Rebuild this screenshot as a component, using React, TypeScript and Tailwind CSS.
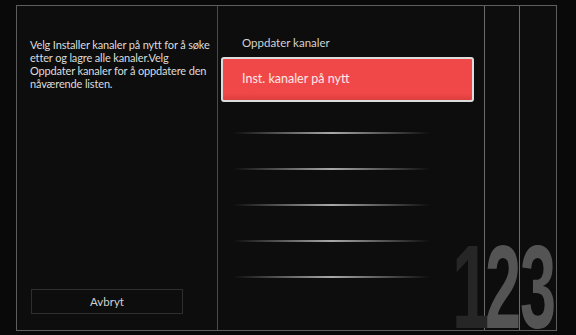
import React from 'react';

const Separator: React.FC = () => (
  <div className="h-[2px] w-[197px] ml-[15px] bg-gradient-to-r from-transparent via-[#a8a8a8] to-transparent" />
);

export default function App() {
  return (
    <div
      className="w-[576px] h-[335px] bg-[#090909] pt-[5px] pl-[16px] pr-[19px] pb-[4px]"
      style={{ fontFamily: 'Lato, "Open Sans", sans-serif' }}
    >
      <div className="relative flex h-full border border-[#5e5e5e] bg-[#0d0d0d] overflow-hidden">
        {/* left help panel */}
        <div className="w-[201px] shrink-0 border-r border-[#4a4a4a] flex flex-col justify-between pl-[13px] pt-[32px] pb-[16px]">
          <p className="text-[11px] leading-[13px] tracking-[-0.15px] text-[#dcdcdc] w-[180px]">
            Velg Installer kanaler på nytt for å søke etter og lagre alle kanaler.Velg Oppdater kanaler for å oppdatere den nåværende listen.
          </p>
          <div className="w-[152px] h-[25px] ml-px border border-[#2e2e2e] flex items-center justify-center text-[11.5px] text-[#d0d0d0]">
            Avbryt
          </div>
        </div>

        {/* options */}
        <div className="w-[267px] shrink-0 border-r border-[#6a6a6a] flex flex-col">
          <div className="mt-[30px] pl-[24px] h-[14px] text-[11.5px] leading-[14px] text-[#d2d2d2]">Oppdater kanaler</div>
          <div className="mt-[7px] ml-[3px] w-[253px] h-[45px] rounded-[3px] border-2 border-[#dcdcdc] bg-gradient-to-b from-[#f04848] from-85% to-[#dc3e3e] flex items-center pl-[19px] text-[12.5px] text-[#fbe9e9]">
            Inst. kanaler på nytt
          </div>
          <div className="mt-[30px] flex flex-col gap-[34px]">
            <Separator />
            <Separator />
            <Separator />
            <Separator />
            <Separator />
          </div>
        </div>

        <div className="w-[35px] shrink-0 border-r border-[#6a6a6a]" />
        <div className="flex-1" />

        {/* step numbers */}
        <div className="absolute left-[435px] top-[222px] flex text-[118px] leading-none font-bold" style={{ fontFamily: '"Liberation Sans", Arial, sans-serif' }}>
          <span className="inline-block w-[33px] text-[#262626] scale-x-[0.58] origin-left">1</span>
          <span className="inline-block w-[35px] text-[#545454] scale-x-[0.55] origin-left">2</span>
          <span className="inline-block w-[35px] text-[#545454] scale-x-[0.55] origin-left">3</span>
        </div>
      </div>
    </div>
  );
}
